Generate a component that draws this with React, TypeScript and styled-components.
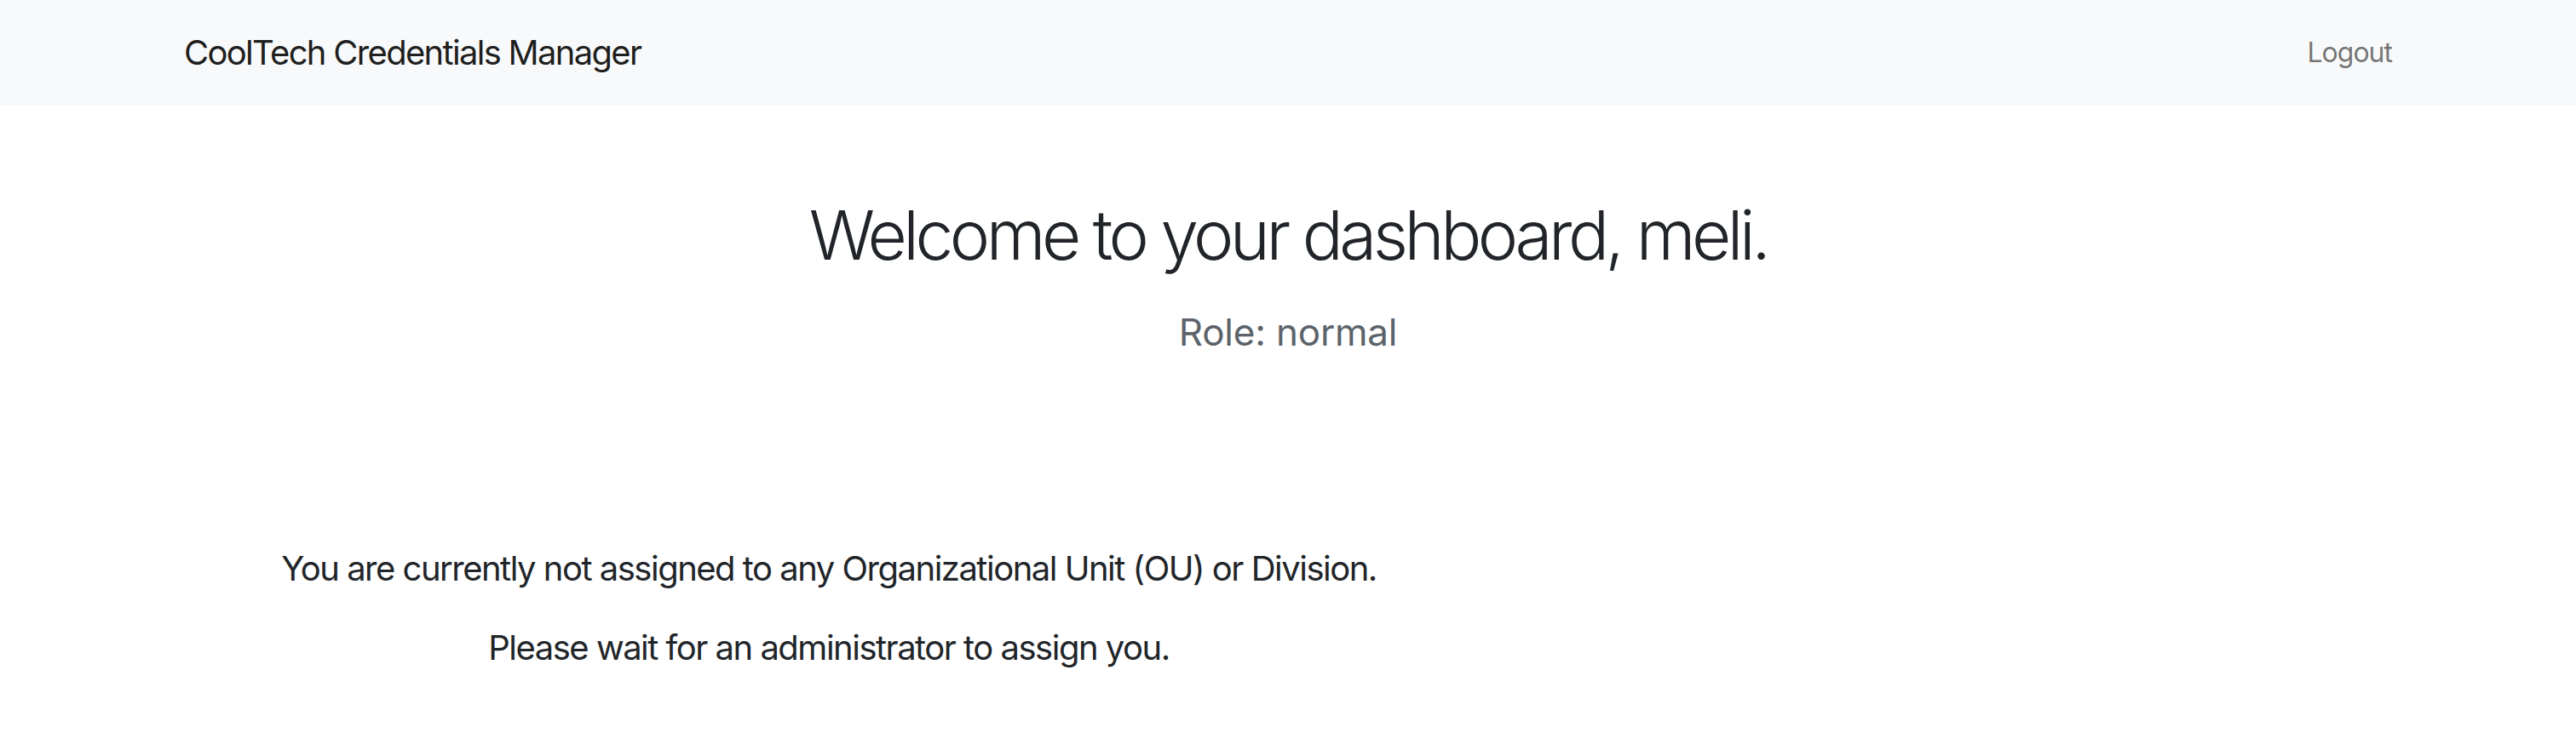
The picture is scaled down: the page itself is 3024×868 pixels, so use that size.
import React from "react";
import styled, { createGlobalStyle } from "styled-components";

const GlobalStyle = createGlobalStyle`
  html, body {
    margin: 0;
    padding: 0;
    background: #ffffff;
    font-family: Inter, "Noto Sans", "Liberation Sans", sans-serif;
    color: #212529;
  }
  * { box-sizing: border-box; }
`;

const NavBar = styled.nav`
  height: 124px;
  background: #f8f9fa;
`;

const NavContainer = styled.div`
  height: 100%;
  padding: 0 216px;
  display: flex;
  align-items: center;
  justify-content: space-between;
`;

const Brand = styled.a`
  font-size: 40px;
  line-height: 1.5;
  color: rgba(0, 0, 0, 0.9);
  text-decoration: none;
  letter-spacing: -1.7px;
`;

const NavLink = styled.a`
  font-size: 32px;
  line-height: 1.5;
  color: rgba(0, 0, 0, 0.55);
  text-decoration: none;
  letter-spacing: -1px;
  cursor: pointer;
`;

const Header = styled.header`
  display: flex;
  flex-direction: column;
  align-items: center;
  padding-top: 104px;
`;

const Title = styled.h1`
  margin: 0;
  font-size: 80px;
  font-weight: 300;
  line-height: 1.2;
  letter-spacing: -4.5px;
  color: #212529;
`;

const Role = styled.h5`
  margin: 40px 0 0;
  font-size: 44px;
  font-weight: 400;
  line-height: 1.2;
  color: #5c636a;
  letter-spacing: -0.2px;
`;

const Notice = styled.section`
  width: 1730px;
  padding-left: 216px;
  margin-top: 221px;
  display: flex;
  flex-direction: column;
  align-items: center;
  gap: 33px;
`;

const NoticeLine = styled.p`
  margin: 0;
  font-size: 40px;
  line-height: 1.5;
  color: #212529;
  letter-spacing: -1.5px;
`;

export default function App() {
  return (
    <>
      <GlobalStyle />
      <NavBar>
        <NavContainer>
          <Brand href="#">CoolTech Credentials Manager</Brand>
          <NavLink>Logout</NavLink>
        </NavContainer>
      </NavBar>
      <Header>
        <Title>Welcome to your dashboard, meli.</Title>
        <Role>Role: normal</Role>
      </Header>
      <Notice>
        <NoticeLine>
          You are currently not assigned to any Organizational Unit (OU) or Division.
        </NoticeLine>
        <NoticeLine>Please wait for an administrator to assign you.</NoticeLine>
      </Notice>
    </>
  );
}
